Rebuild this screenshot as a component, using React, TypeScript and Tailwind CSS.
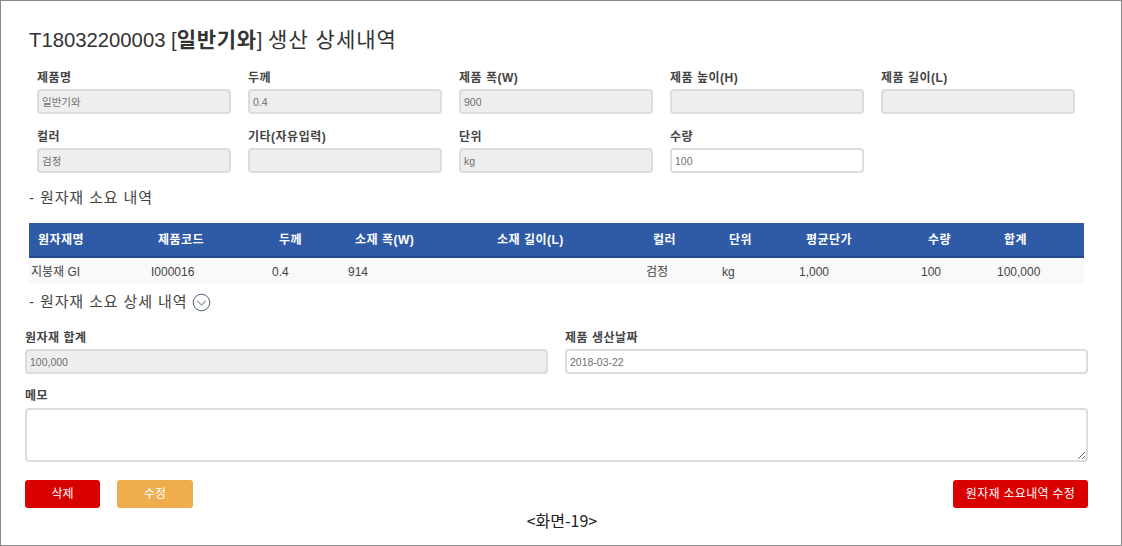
const font = "font-['Liberation_Sans','Noto_Sans_CJK_KR',sans-serif]";

function Field({ label, value = "", disabled = true }: { label: string; value?: string; disabled?: boolean }) {
  return (
    <div>
      <div className="mb-[3px] h-[17px] text-[12px] leading-[18px] font-bold tracking-[0.5px] text-[#444]">{label}</div>
      <input
        readOnly
        disabled={disabled}
        value={value}
        className={`block h-[25px] w-full rounded-[4px] border-2 border-[#dcdcdc] px-[3px] text-[10.5px] text-[#707070] opacity-100 outline-none ${disabled ? "bg-[#eeeeee]" : "bg-white"}`}
      />
    </div>
  );
}

const cols = "grid-cols-[120px_121px_76px_142px_156px_76px_77px_122px_76px_89px]";
const heads = ["원자재명", "제품코드", "두께", "소재 폭(W)", "소재 길이(L)", "컬러", "단위", "평균단가", "수량", "합계"];
const cells = ["지붕재 GI", "I000016", "0.4", "914", "", "검정", "kg", "1,000", "100", "100,000"];

export default function App() {
  return (
    <div className={`${font} h-[546px] w-[1122px] overflow-hidden border border-[#888] bg-white`}>
      <div className="flex flex-col pt-6 pr-[33px] pl-[24px]">
        <h1 className="ml-1 h-7 text-[20.3px] leading-[30px] text-[#333]">
          T18032200003 [<b className="text-[21px] font-bold tracking-[0.7px]">일반기와</b>] <span className="text-[21px] tracking-[1px]">생산 상세내역</span>
        </h1>

        <div className="mt-4 ml-3 grid w-[1038px] grid-cols-5 gap-x-[17px] gap-y-[14px]">
          <Field label="제품명" value="일반기와" />
          <Field label="두께" value="0.4" />
          <Field label="제품 폭(W)" value="900" />
          <Field label="제품 높이(H)" />
          <Field label="제품 길이(L)" />
          <Field label="컬러" value="검정" />
          <Field label="기타(자유입력)" />
          <Field label="단위" value="kg" />
          <Field label="수량" value="100" disabled={false} />
        </div>

        <div className="mt-[14px] ml-1 h-5 text-[15px] leading-[22px] tracking-[0.9px] text-[#444]">- 원자재 소요 내역</div>

        <div className="mt-4 ml-1 w-[1055px] text-[12px]">
          <div className={`grid h-[35px] ${cols} items-center border-b-2 border-[#24498c] bg-[#2f5aa6] font-bold tracking-[0.5px] text-white`}>
            {heads.map((h) => (
              <div key={h} className="pl-[9px]">{h}</div>
            ))}
          </div>
          <div className={`grid h-[26px] ${cols} items-center bg-[#f9f9f9] pt-[1px] text-[#444]`}>
            {cells.map((c, i) => (
              <div key={i} className="pl-[2px]">{c}</div>
            ))}
          </div>
        </div>

        <div className="mt-2 ml-1 flex h-5 items-center text-[15px] leading-5 tracking-[0.9px] text-[#444]">
          <span>- 원자재 소요 상세 내역</span>
          <svg className="ml-[5px]" width="19" height="19" viewBox="0 0 19 19" fill="none" stroke="#4a5678" strokeWidth="1">
            <circle cx="9.5" cy="9.5" r="8.3" />
            <path d="M5.2 7.8 9.5 12l4.3-4.2" />
          </svg>
        </div>

        <div className="mt-[17px] grid w-[1063px] grid-cols-2 gap-x-[17px]">
          <Field label="원자재 합계" value="100,000" />
          <Field label="제품 생산날짜" value="2018-03-22" disabled={false} />
        </div>

        <div className="mt-[13px] mb-[4px] h-[17px] text-[12px] leading-[18px] font-bold tracking-[0.5px] text-[#444]">메모</div>
        <textarea
          readOnly
          className="block h-[54px] w-[1063px] rounded-[4px] border-2 border-[#dcdcdc] bg-white outline-none"
        />

        <div className="mt-[18px] flex w-[1063px] items-center text-[12px] text-white">
          <button className="h-7 w-[75px] rounded-[3px] bg-[#d90000]">삭제</button>
          <button className="ml-[17px] h-7 w-[76px] rounded-[3px] bg-[#f0ad4e]">수정</button>
          <button className="ml-auto h-7 w-[135px] rounded-[3px] bg-[#d90000] tracking-[0.3px]">원자재 소요내역 수정</button>
        </div>

        <div className="mt-[4px] h-4 w-[1074px] text-center font-['Noto_Sans_CJK_KR',sans-serif] text-[16px] leading-4 text-[#222]">&lt;화면-19&gt;</div>
      </div>
    </div>
  );
}
